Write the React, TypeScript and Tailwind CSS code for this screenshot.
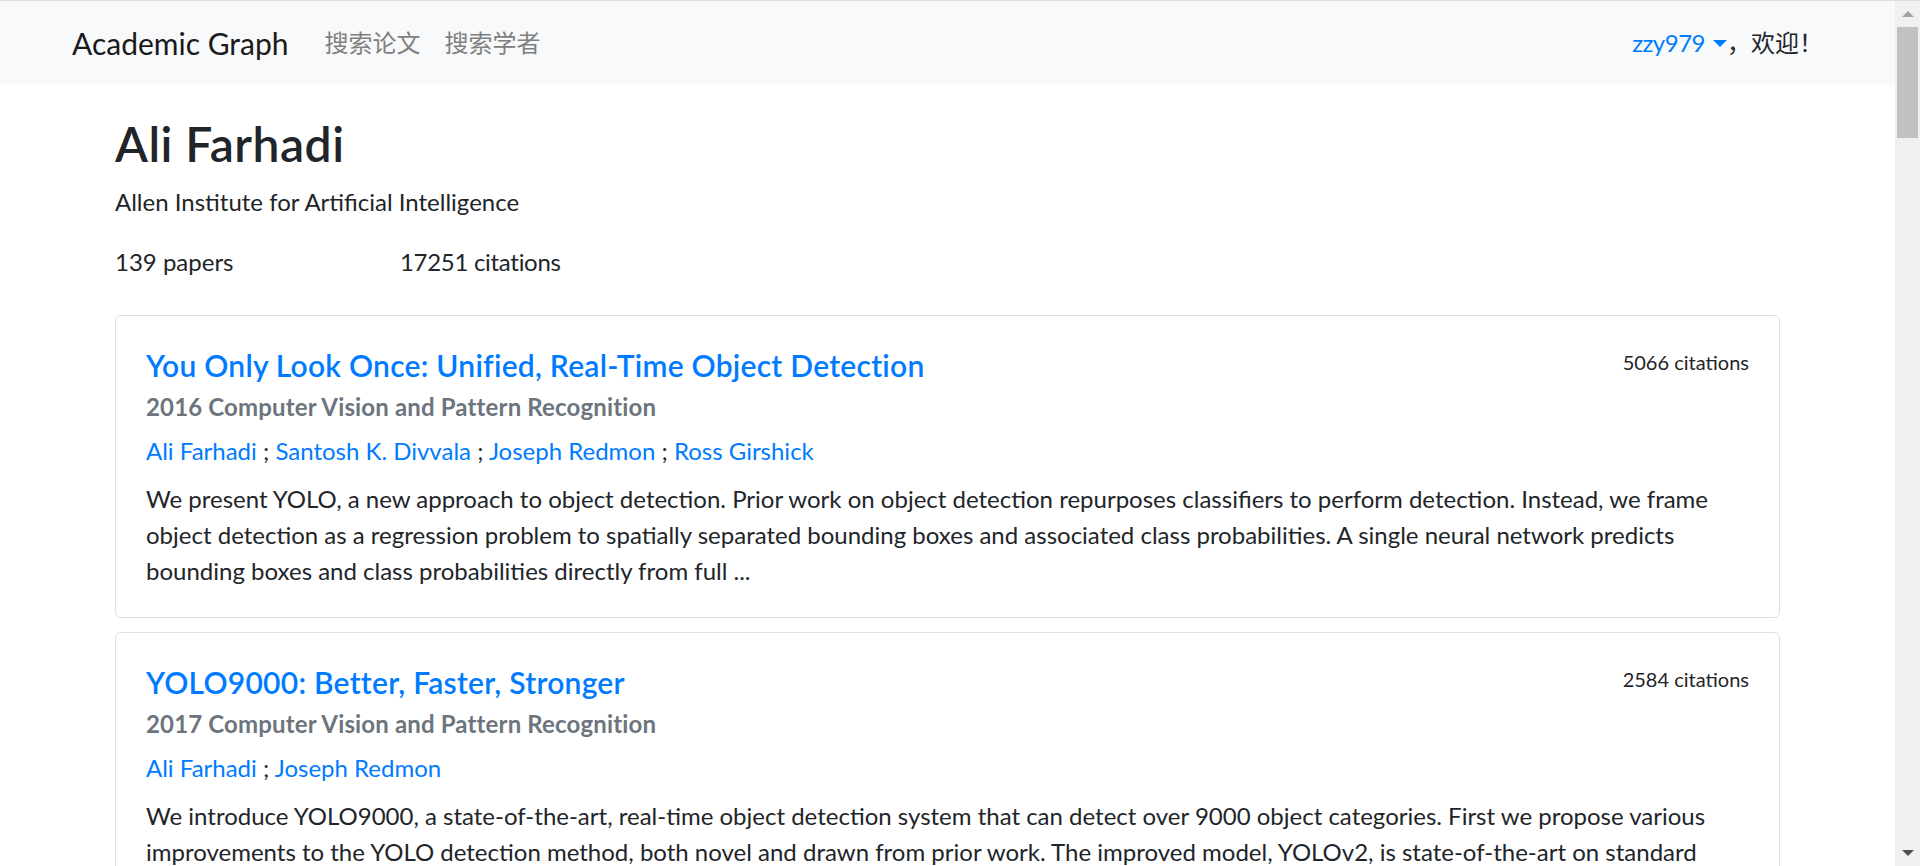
type Paper = {
  title: string;
  venue: string;
  authors: string[];
  cites: number;
  abstract: string[];
};

const papers: Paper[] = [
  {
    title: "You Only Look Once: Unified, Real-Time Object Detection",
    venue: "2016 Computer Vision and Pattern Recognition",
    authors: ["Ali Farhadi", "Santosh K. Divvala", "Joseph Redmon", "Ross Girshick"],
    cites: 5066,
    abstract: [
      "We present YOLO, a new approach to object detection. Prior work on object detection repurposes classifiers to perform detection. Instead, we frame",
      "object detection as a regression problem to spatially separated bounding boxes and associated class probabilities. A single neural network predicts",
      "bounding boxes and class probabilities directly from full ...",
    ],
  },
  {
    title: "YOLO9000: Better, Faster, Stronger",
    venue: "2017 Computer Vision and Pattern Recognition",
    authors: ["Ali Farhadi", "Joseph Redmon"],
    cites: 2584,
    abstract: [
      "We introduce YOLO9000, a state-of-the-art, real-time object detection system that can detect over 9000 object categories. First we propose various",
      "improvements to the YOLO detection method, both novel and drawn from prior work. The improved model, YOLOv2, is state-of-the-art on standard",
    ],
  },
];

function Navbar() {
  return (
    <nav className="h-[84px] bg-[#f8f9fa] px-[72px] flex items-center justify-between">
      <div className="flex items-center">
        <a className="text-[30px] leading-[40px] text-[#1a1a1a] mr-[24px]">Academic Graph</a>
        <a className="text-[24px] leading-[36px] text-[#808080] px-[12px]">搜索论文</a>
        <a className="text-[24px] leading-[36px] text-[#808080] px-[12px]">搜索学者</a>
      </div>
      <div className="flex items-center text-[24px] leading-[36px]">
        <a className="text-[#007bff] flex items-center tracking-[-0.5px]">
          zzy979
          <span className="block ml-[8px] border-x-[7px] border-t-[7px] border-x-transparent border-t-[#007bff]" />
        </a>
        <span className="text-[#212529]">，欢迎！</span>
      </div>
    </nav>
  );
}

function PaperCard({ p }: { p: Paper }) {
  return (
    <div className="border border-[#dfdfdf] rounded-[6px] px-[30px] pt-[31px] pb-[28px] mb-[14px]">
      <div className="flex justify-between items-start">
        <a className="text-[30px] leading-[36px] font-semibold tracking-[0.25px] text-[#007bff]">{p.title}</a>
        <span className="text-[20px] leading-[24px] mt-[3px] text-[#212529]">{p.cites} citations</span>
      </div>
      <div className="mt-[9px] text-[24px] leading-[29px] font-bold tracking-[0.15px] text-[#6c757d]">{p.venue}</div>
      <div className="mt-[12px] text-[24px] leading-[36px] text-[#212529]">
        {p.authors.map((a, i) => (
          <span key={a}>
            {i > 0 && " ; "}
            <a className="text-[#007bff]">{a}</a>
          </span>
        ))}
      </div>
      <div className="mt-[12px] text-[24px] leading-[36px] text-[#212529]">
        {p.abstract.map((line) => (
          <div key={line} className="whitespace-nowrap">{line}</div>
        ))}
      </div>
    </div>
  );
}

function Scrollbar() {
  return (
    <div className="w-[25px] shrink-0 bg-[#f0f0f0] flex flex-col items-center">
      <div className="h-[26px] flex items-center justify-center">
        <span className="block border-x-[6px] border-b-[6px] border-x-transparent border-b-[#a3a3a3]" />
      </div>
      <div className="w-[21px] h-[111px] bg-[#c1c1c1]" />
      <div className="flex-1" />
      <div className="h-[26px] flex items-center justify-center">
        <span className="block border-x-[6px] border-t-[6px] border-x-transparent border-t-[#505050]" />
      </div>
    </div>
  );
}

export default function App() {
  return (
    <div className="h-[866px] overflow-hidden flex flex-col bg-white text-[#212529] font-['Lato','Noto_Sans_CJK_SC',sans-serif]">
      <div className="h-px shrink-0 bg-[#dadce0]" />
      <div className="flex flex-1 min-h-0">
        <div className="flex-1 min-w-0 overflow-hidden">
          <Navbar />
          <main className="px-[115px]">
            <h1 className="mt-[30px] text-[48px] leading-[58px] font-semibold tracking-[0.5px]">Ali Farhadi</h1>
            <p className="mt-[11px] text-[24px] leading-[36px]">Allen Institute for Artificial Intelligence</p>
            <div className="mt-[24px] flex text-[24px] leading-[36px]">
              <div className="w-[285px]">139 papers</div>
              <div className="tracking-[-0.3px]">17251 citations</div>
            </div>
            <div className="mt-[35px]">
              {papers.map((p) => (
                <PaperCard key={p.title} p={p} />
              ))}
            </div>
          </main>
        </div>
        <Scrollbar />
      </div>
    </div>
  );
}
